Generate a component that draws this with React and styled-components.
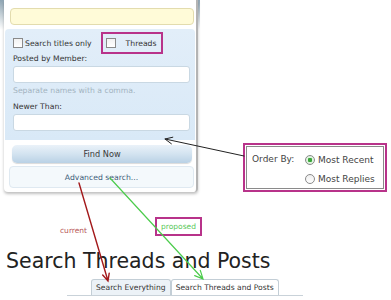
import styled, { createGlobalStyle } from "styled-components"

const GlobalStyle = createGlobalStyle`
  body {
    margin: 0;
    background: #fff;
    font-family: "DejaVu Sans", Verdana, sans-serif;
  }
`

const Page = styled.div`
  position: relative;
  width: 391px;
  height: 300px;
  overflow: hidden;
  background: #fff;
`

const TopRow = styled.div`
  display: flex;
  align-items: flex-start;
`

const Popup = styled.div`
  width: 200px;
  padding-left: 4px;
  box-sizing: border-box;
  background: linear-gradient(180deg, #8fa5b3 0px, rgba(255, 255, 255, 0) 30px);
`

const Panel = styled.div`
  width: 194px;
  box-sizing: border-box;
  background: #fff;
  border-right: 2px solid #b4b4b4;
  border-radius: 0 0 4px 4px;
  box-shadow: 0 2px 3px rgba(0, 0, 0, 0.25);
  padding: 8px 0 4px 0;
  display: flex;
  flex-direction: column;
`

const QueryInput = styled.div`
  height: 17px;
  margin: 0 2px 0 6px;
  box-sizing: border-box;
  background: #fffbd8;
  border: 1px solid #e3dcae;
  border-radius: 4px;
`

const Options = styled.div`
  margin: 4px 1px 0 1px;
  padding: 3px 5px 9px 8px;
  background: linear-gradient(180deg, #e2eef9 0%, #d9e9f7 100%);
  border-radius: 4px 4px 0 0;
  display: flex;
  flex-direction: column;
`

const CheckRow = styled.div`
  display: flex;
  align-items: center;
  height: 22px;
`

const CheckLabel = styled.label`
  display: flex;
  align-items: center;
  gap: 2px;
  font-size: 7.7px;
  color: #333;
`

const Box = styled.span`
  display: inline-block;
  width: 10px;
  height: 10px;
  box-sizing: border-box;
  background: linear-gradient(180deg, #f2f2f2, #fff);
  border: 1px solid #8a8a8a;
`

const Highlight = styled.div`
  display: flex;
  align-items: center;
  height: 22px;
  width: 62px;
  margin-left: 9px;
  box-sizing: border-box;
  border: 2px solid #b8338a;
  padding-left: 3px;
  font-size: 7.7px;
  color: #333;

  & > span {
    margin-right: 10px;
  }
`

const Label = styled.div`
  font-size: 7.7px;
  line-height: 10px;
  color: #333;
  margin-top: ${(p) => p.$top || 0}px;
`

const TextField = styled.div`
  height: 17px;
  margin-top: 2px;
  box-sizing: border-box;
  background: #fff;
  border: 1px solid #c9d8e3;
  border-radius: 3px;
`

const Hint = styled.div`
  font-size: 7.7px;
  line-height: 11px;
  margin-top: 2px;
  color: #a3b3bf;
`

const FindButton = styled.div`
  height: 18px;
  margin: 5px 4px 0 8px;
  border-radius: 5px;
  background: linear-gradient(180deg, #eaf2f9 0%, #d3e3f0 50%, #b9d1e5 100%);
  box-shadow: 0 1px 1px rgba(0, 0, 0, 0.15);
  display: flex;
  align-items: center;
  justify-content: center;
  font-size: 8.2px;
  color: #3a3a3a;
`

const AdvancedBox = styled.div`
  height: 22px;
  margin: 3px 2px 0 5px;
  box-sizing: border-box;
  border: 1px solid #dfe9f1;
  border-radius: 4px;
  background: #f4f9fc;
  display: flex;
  align-items: center;
  justify-content: center;
  font-size: 7.7px;
  color: #3d5d7a;
`

const OrderBox = styled.div`
  margin: 143px 0 0 43px;
  width: 144px;
  height: 49px;
  box-sizing: border-box;
  border: 2px solid #b8338a;
  padding: 1px;
`

const OrderInner = styled.div`
  height: 100%;
  box-sizing: border-box;
  border: 1px solid #8a8a8a;
  display: flex;
  padding: 3px 0 0 5px;
  font-size: 9px;
  color: #444;
`

const OrderLabel = styled.div`
  width: 53px;
  line-height: 18px;
`

const RadioList = styled.div`
  display: flex;
  flex-direction: column;
`

const RadioRow = styled.div`
  display: flex;
  align-items: center;
  gap: 3px;
  height: 19px;
`

const Radio = styled.span`
  width: 10px;
  height: 10px;
  box-sizing: border-box;
  border-radius: 50%;
  border: 1px solid #8a8a8a;
  background: ${(p) =>
    p.$checked
      ? "radial-gradient(circle, #3aa63a 0 2px, #dff3df 2.5px 100%)"
      : "linear-gradient(180deg, #eee, #fff)"};
`

const Heading = styled.h1`
  margin: 57px 0 0 6px;
  font-size: 20.5px;
  line-height: 24px;
  font-weight: normal;
  color: #222;
`

const TabBar = styled.div`
  display: flex;
  margin: 6px 0 0 67px;
  width: 236px;
  padding-left: 24px;
  box-sizing: border-box;
  border-bottom: 1px solid #c9d2d9;
`

const Tab = styled.div`
  height: 15px;
  padding: 0 4px;
  border: 1px solid #c3ced6;
  border-bottom: none;
  border-radius: 3px 3px 0 0;
  background: ${(p) => (p.$active ? "#fff" : "#ecf2f7")};
  display: flex;
  align-items: center;
  font-size: 7.6px;
  color: #333;
`

const Overlay = styled.svg`
  position: absolute;
  left: 0;
  top: 0;
  pointer-events: none;
`

const Note = styled.div`
  position: absolute;
  left: ${(p) => p.$x}px;
  top: ${(p) => p.$y}px;
  font-size: 7.5px;
  color: ${(p) => p.$color};
`

const NoteBox = styled.div`
  position: absolute;
  left: 155px;
  top: 217px;
  width: 47px;
  height: 19px;
  box-sizing: border-box;
  border: 2px solid #b8338a;
  display: flex;
  align-items: center;
  justify-content: center;
  font-size: 7.5px;
  color: #58c858;
`

export default function App() {
  return (
    <>
      <GlobalStyle />
      <Page>
        <TopRow>
          <Popup>
            <Panel>
              <QueryInput />
              <Options>
                <CheckRow>
                  <CheckLabel>
                    <Box />
                    Search titles only
                  </CheckLabel>
                  <Highlight>
                    <Box />
                    Threads
                  </Highlight>
                </CheckRow>
                <Label>Posted by Member:</Label>
                <TextField />
                <Hint>Separate names with a comma.</Hint>
                <Label $top={6}>Newer Than:</Label>
                <TextField />
              </Options>
              <FindButton>Find Now</FindButton>
              <AdvancedBox>Advanced search...</AdvancedBox>
            </Panel>
          </Popup>
          <OrderBox>
            <OrderInner>
              <OrderLabel>Order By:</OrderLabel>
              <RadioList>
                <RadioRow>
                  <Radio $checked />
                  Most Recent
                </RadioRow>
                <RadioRow>
                  <Radio />
                  Most Replies
                </RadioRow>
              </RadioList>
            </OrderInner>
          </OrderBox>
        </TopRow>
        <Heading>Search Threads and Posts</Heading>
        <TabBar>
          <Tab>Search Everything</Tab>
          <Tab $active>Search Threads and Posts</Tab>
        </TabBar>

        <Note $x={60} $y={226} $color="#b85858">current</Note>
        <NoteBox>proposed</NoteBox>

        <Overlay width="391" height="300" viewBox="0 0 391 300">
          <g fill="none" strokeLinecap="round">
            <path d="M244 156 L165 139 M171.4 143.8 L165 139 L172.8 137.2" stroke="#222" strokeWidth="1" />
            <path d="M79 183 L108 281 M109.2 273.1 L108 281 L102.7 275" stroke="#a3191b" strokeWidth="1.4" />
            <path d="M110 178 L203 279 M200.3 270.4 L203 279 L194.7 275.6" stroke="#4ccc4c" strokeWidth="1.2" />
          </g>
        </Overlay>
      </Page>
    </>
  )
}
